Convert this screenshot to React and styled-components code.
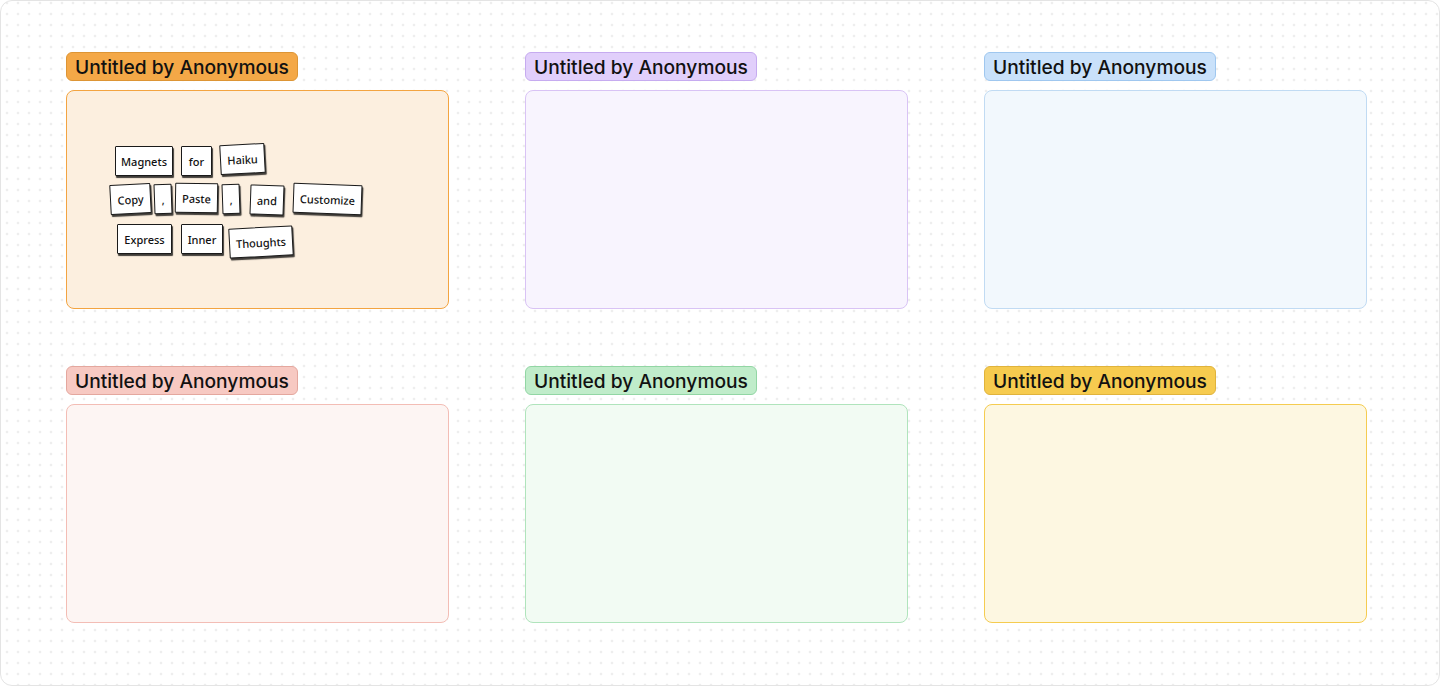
import React from "react";
import styled, { createGlobalStyle } from "styled-components";

const GlobalStyle = createGlobalStyle`
  html, body {
    margin: 0;
    padding: 0;
    background: #ffffff;
  }
  * {
    box-sizing: border-box;
  }
`;

const palette = {
  orange: { tag: "#f4a847", tagBorder: "#dd9535", box: "#fcefdf", boxBorder: "#f3a441" },
  purple: { tag: "#e1cffb", tagBorder: "#c6abf0", box: "#f8f4fe", boxBorder: "#d9c3f5" },
  blue: { tag: "#c9e1fa", tagBorder: "#9fc7ef", box: "#f2f8fd", boxBorder: "#c1dbf3" },
  red: { tag: "#f7c9c2", tagBorder: "#e4a79e", box: "#fdf5f3", boxBorder: "#f3bdb5" },
  green: { tag: "#c0ecca", tagBorder: "#92d6a4", box: "#f2fbf3", boxBorder: "#b0e4bc" },
  yellow: { tag: "#f6cb4f", tagBorder: "#e0b33c", box: "#fdf7e1", boxBorder: "#f5cc50" },
};

const boards = ["orange", "purple", "blue", "red", "green", "yellow"];

const magnets = [
  { text: "Magnets", x: 48, y: 55, w: 58, r: 0 },
  { text: "for", x: 114, y: 55, w: 31, r: 0 },
  { text: "Haiku", x: 153, y: 53, w: 45, r: -3 },
  { text: "Copy", x: 43, y: 93, w: 41, r: -3 },
  { text: ",", x: 87, y: 93, w: 18, r: -2 },
  { text: "Paste", x: 108, y: 92, w: 43, r: 1 },
  { text: ",", x: 155, y: 93, w: 18, r: -2 },
  { text: "and", x: 183, y: 94, w: 34, r: 2 },
  { text: "Customize", x: 226, y: 93, w: 69, r: 2 },
  { text: "Express", x: 50, y: 133, w: 55, r: 0 },
  { text: "Inner", x: 114, y: 133, w: 42, r: 0 },
  { text: "Thoughts", x: 162, y: 136, w: 64, r: -3 },
];

const Frame = styled.div`
  width: 1440px;
  height: 686px;
  border: 1px solid #e4e4e4;
  border-radius: 12px;
  background-color: #ffffff;
  background-image: radial-gradient(circle, #d6d6d6 0.8px, transparent 1.1px);
  background-size: 11px 11px;
  background-position: 0.5px -3.5px;
  padding: 51px 0 0 65px;
  overflow: hidden;
`;

const Grid = styled.div`
  display: grid;
  grid-template-columns: repeat(3, 383px);
  column-gap: 76px;
  row-gap: 57px;
`;

const Board = styled.div`
  display: flex;
  flex-direction: column;
  align-items: flex-start;
  gap: 9px;
`;

const Tag = styled.div`
  height: 29px;
  padding: 0 8px;
  display: flex;
  align-items: center;
  border-radius: 6px;
  background: ${(p) => p.$c.tag};
  border: 1px solid ${(p) => p.$c.tagBorder};
  font-family: Inter, "Liberation Sans", sans-serif;
  font-size: 19.2px;
  font-weight: 500;
  color: #111111;
  white-space: nowrap;
`;

const Fridge = styled.div`
  position: relative;
  width: 383px;
  height: 219px;
  border-radius: 8px;
  background: ${(p) => p.$c.box};
  border: 1.3px solid ${(p) => p.$c.boxBorder};
`;

const Magnet = styled.div`
  position: absolute;
  left: ${(p) => p.$x}px;
  top: ${(p) => p.$y}px;
  width: ${(p) => p.$w}px;
  height: 30px;
  display: flex;
  align-items: center;
  justify-content: center;
  background: #ffffff;
  border: 1px solid #1a1a1a;
  border-radius: 1px;
  box-shadow: 1px 2px 1px rgba(0, 0, 0, 0.75);
  transform: rotate(${(p) => p.$r}deg);
  font-family: "Noto Sans", "DejaVu Sans", sans-serif;
  font-size: 11px;
  font-weight: 500;
  color: #111111;
`;

export default function App() {
  return (
    <>
      <GlobalStyle />
      <Frame>
        <Grid>
          {boards.map((name, i) => {
            const c = palette[name];
            return (
              <Board key={name}>
                <Tag $c={c}>Untitled by Anonymous</Tag>
                <Fridge $c={c}>
                  {i === 0 &&
                    magnets.map((m, idx) => (
                      <Magnet key={idx} $x={m.x} $y={m.y} $w={m.w} $r={m.r}>
                        {m.text}
                      </Magnet>
                    ))}
                </Fridge>
              </Board>
            );
          })}
        </Grid>
      </Frame>
    </>
  );
}
